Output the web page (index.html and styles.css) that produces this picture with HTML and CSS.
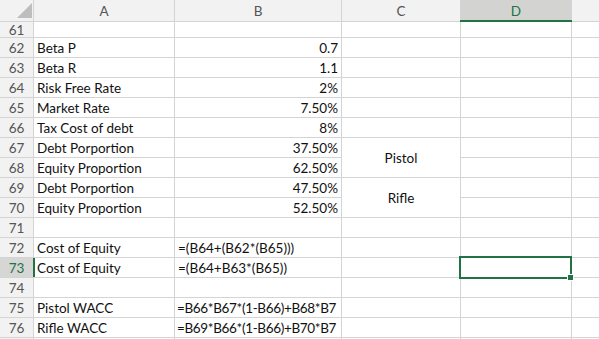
FILE: index.html
```html
<!DOCTYPE html>
<html>
<head>
<meta charset="utf-8">
<link rel="stylesheet" href="styles.css">
</head>
<body>
<div class="sheet">
  <div class="hd corner"><svg width="33" height="21" viewBox="0 0 33 21"><polygon points="32,3 32,18 17,18" fill="#bdbdbd"/></svg></div>
  <div class="hd">A</div>
  <div class="hd">B</div>
  <div class="hd">C</div>
  <div class="hd hd-sel">D</div>
  <div class="hd"></div>

  <div class="rh">61</div><div class="c"></div><div class="c"></div><div class="c"></div><div class="c"></div><div class="c"></div>
  <div class="rh">62</div><div class="c">Beta P</div><div class="c r">0.7</div><div class="c"></div><div class="c"></div><div class="c"></div>
  <div class="rh">63</div><div class="c">Beta R</div><div class="c r">1.1</div><div class="c"></div><div class="c"></div><div class="c"></div>
  <div class="rh">64</div><div class="c">Risk Free Rate</div><div class="c r">2%</div><div class="c"></div><div class="c"></div><div class="c"></div>
  <div class="rh">65</div><div class="c">Market Rate</div><div class="c r">7.50%</div><div class="c"></div><div class="c"></div><div class="c"></div>
  <div class="rh">66</div><div class="c">Tax Cost of debt</div><div class="c r">8%</div><div class="c"></div><div class="c"></div><div class="c"></div>
  <div class="rh">67</div><div class="c">Debt Porportion</div><div class="c r">37.50%</div><div class="c ctr span2">Pistol</div><div class="c"></div><div class="c"></div>
  <div class="rh">68</div><div class="c">Equity Proportion</div><div class="c r">62.50%</div><div class="c"></div><div class="c"></div>
  <div class="rh">69</div><div class="c">Debt Porportion</div><div class="c r">47.50%</div><div class="c ctr span2">Rifle</div><div class="c"></div><div class="c"></div>
  <div class="rh">70</div><div class="c">Equity Proportion</div><div class="c r">52.50%</div><div class="c"></div><div class="c"></div>
  <div class="rh">71</div><div class="c"></div><div class="c"></div><div class="c"></div><div class="c"></div><div class="c"></div>
  <div class="rh">72</div><div class="c">Cost of Equity</div><div class="c">=(B64+(B62*(B65)))</div><div class="c"></div><div class="c"></div><div class="c"></div>
  <div class="rh rh-sel">73</div><div class="c">Cost of Equity</div><div class="c">=(B64+B63*(B65))</div><div class="c"></div><div class="c cell-sel"><span class="sel-box"><span class="handle"></span></span></div><div class="c"></div>
  <div class="rh">74</div><div class="c"></div><div class="c"></div><div class="c"></div><div class="c"></div><div class="c"></div>
  <div class="rh">75</div><div class="c">Pistol WACC</div><div class="c f">=B66*B67*(1-B66)+B68*B7</div><div class="c"></div><div class="c"></div><div class="c"></div>
  <div class="rh">76</div><div class="c">Rifle WACC</div><div class="c f">=B69*B66*(1-B66)+B70*B7</div><div class="c"></div><div class="c"></div><div class="c"></div>
  <div class="rh"></div><div class="c"></div><div class="c"></div><div class="c"></div><div class="c"></div><div class="c"></div>
</div>
</body>
</html>
```
FILE: styles.css
```css
html, body {
  margin: 0;
  padding: 0;
  background: #ffffff;
}

.sheet {
  width: 599px;
  height: 339px;
  overflow: hidden;
  display: grid;
  grid-template-columns: 33px 140px 166px 118px 110px 1fr;
  grid-template-rows: 21px 15px repeat(15, 19px) 1fr;
  gap: 1px;
  background: #d4d4d4;
  font-family: Lato, "Open Sans", sans-serif;
  font-size: 13.5px;
  color: #111111;
}

.hd {
  background: #f2f2f2;
  color: #555555;
  display: flex;
  align-items: center;
  justify-content: center;
  position: relative;
  font-size: 13.5px;
}

.corner {
  display: block;
}

.corner svg {
  display: block;
}

.hd-sel {
  background: #d3d3d1;
  color: #217346;
}

.hd-sel::after {
  content: "";
  position: absolute;
  left: -1px;
  right: -1px;
  bottom: -1px;
  height: 2px;
  background: #217346;
  z-index: 1;
}

.rh {
  background: #f2f2f2;
  color: #555555;
  display: flex;
  align-items: center;
  justify-content: center;
  position: relative;
  font-size: 13.5px;
}

.rh-sel {
  background: #d6d6d4;
  color: #217346;
}

.rh-sel::after {
  content: "";
  position: absolute;
  top: 0;
  bottom: 0;
  right: -2px;
  width: 2px;
  background: #217346;
  z-index: 1;
}

.c {
  background: #ffffff;
  display: flex;
  align-items: center;
  padding: 0 3px;
  white-space: nowrap;
  overflow: hidden;
  position: relative;
}

.f {
  letter-spacing: -0.35px;
  padding: 0 1px 0 2px;
}

.r {
  justify-content: flex-end;
}

.ctr {
  justify-content: center;
}

.span2 {
  grid-row: span 2;
}

.cell-sel {
  overflow: visible;
  z-index: 2;
}

.sel-box {
  position: absolute;
  top: -2px;
  left: -2px;
  right: -1px;
  bottom: -2px;
  border: 2px solid #217346;
}

.handle {
  position: absolute;
  right: -4px;
  bottom: -4px;
  width: 5px;
  height: 5px;
  background: #217346;
  border: 1px solid #ffffff;
}
```
